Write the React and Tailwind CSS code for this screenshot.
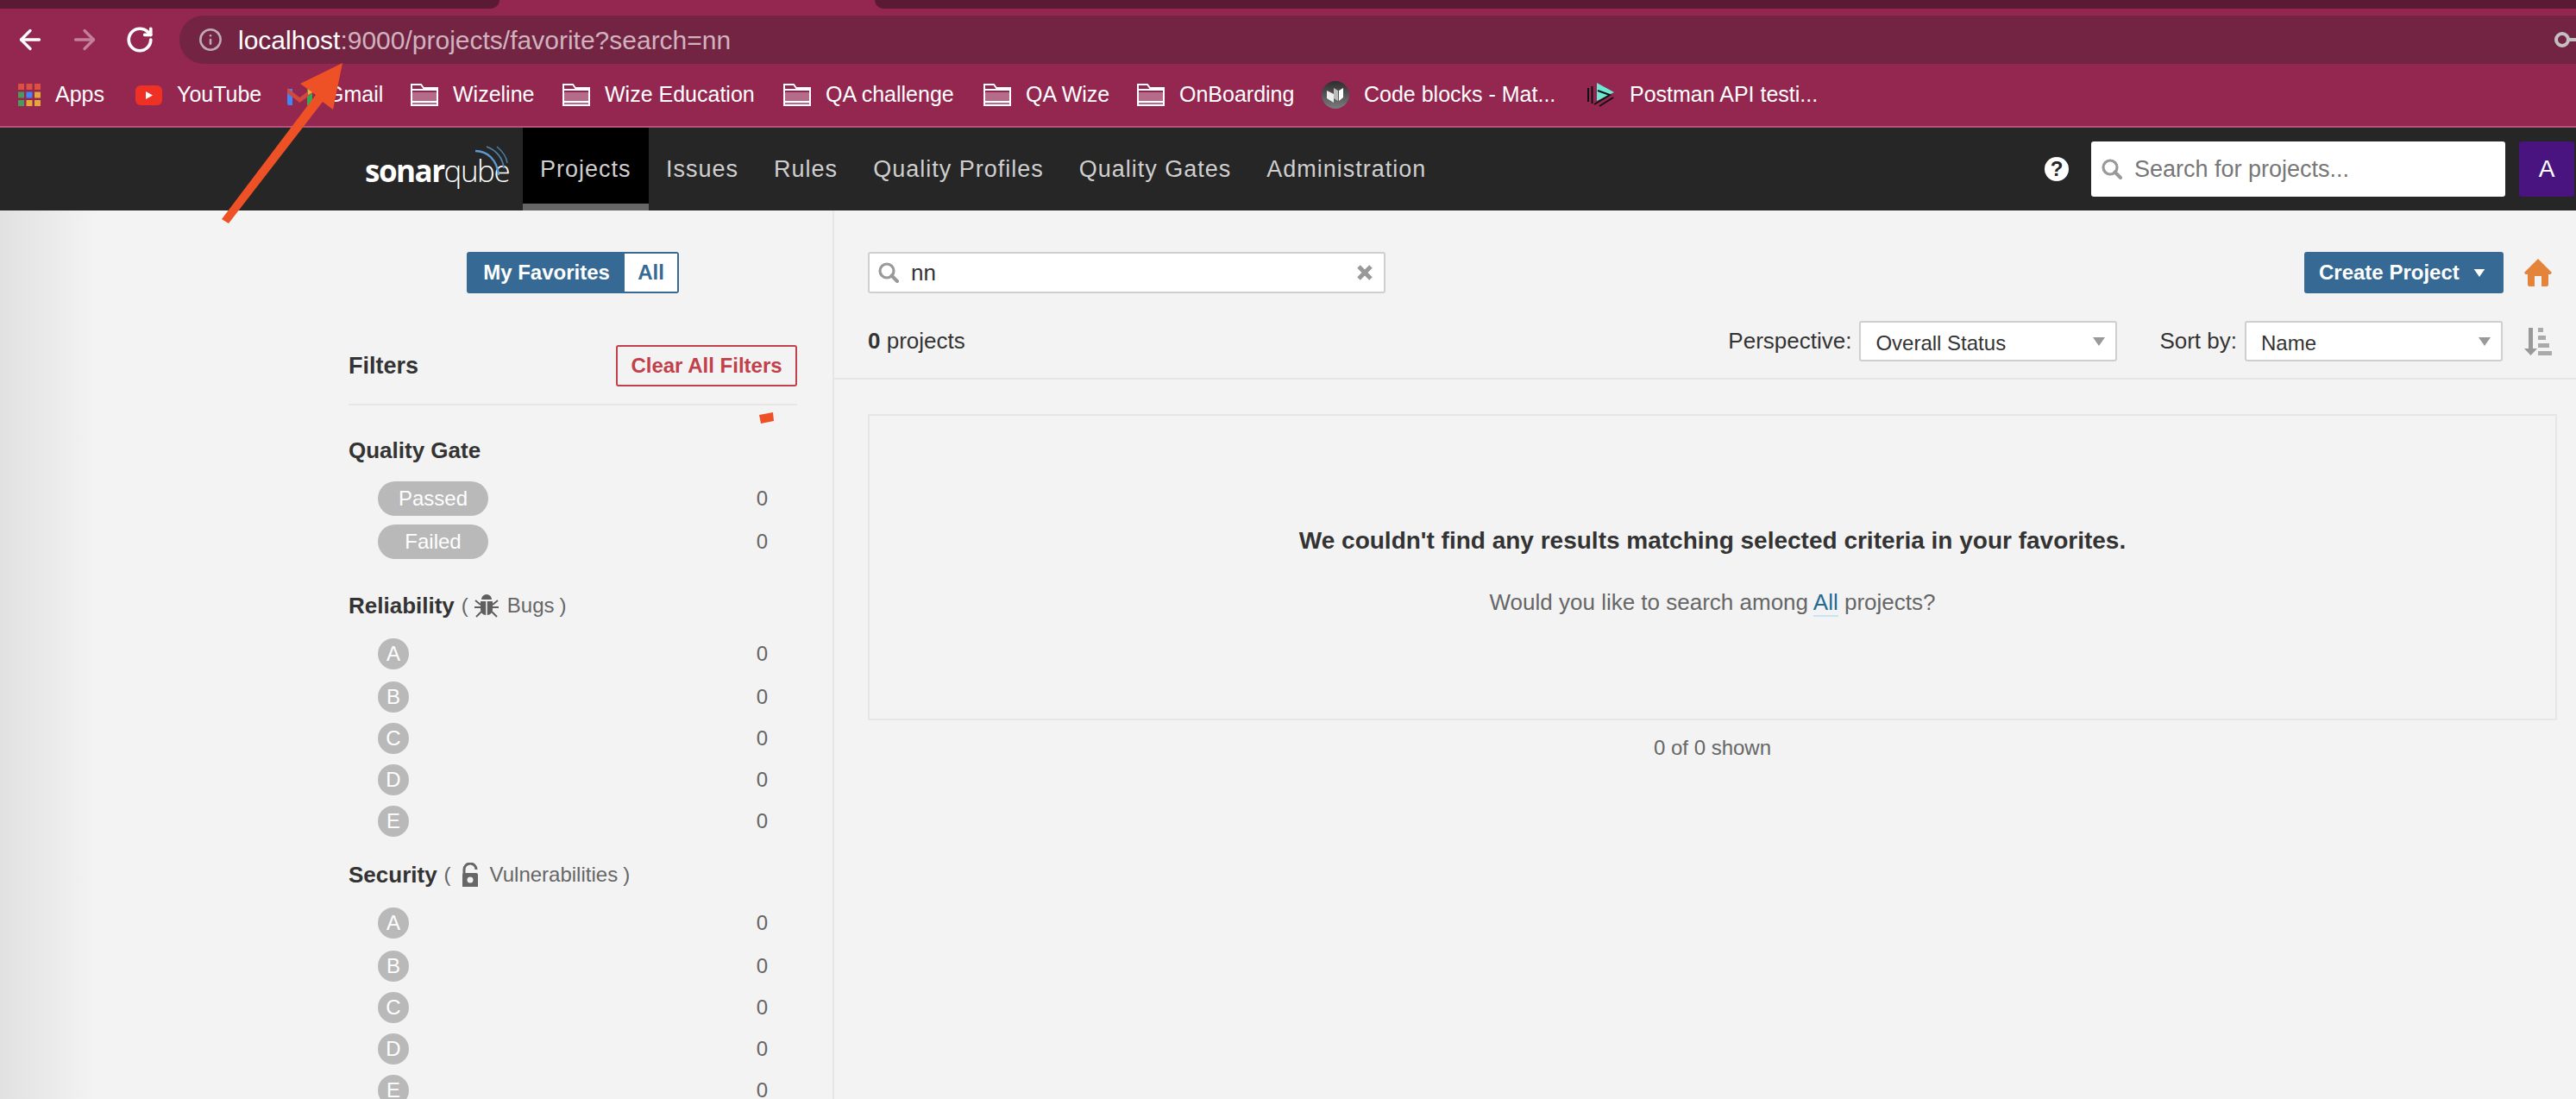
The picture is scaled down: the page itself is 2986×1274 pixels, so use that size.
import React from "react";
import { ArrowLeft, ArrowRight, RotateCw, Info } from "lucide-react";

const Folder = () => (
  <svg width="32" height="26" viewBox="0 0 32 26" className="shrink-0">
    <path d="M1 10h30v14H1z" fill="#b56b8a" />
    <path d="M1 25V1h11l3 4h16v20z M1 7h30 M1 21h30" fill="none" stroke="#fff" strokeWidth="2" />
  </svg>
);

const AppsIcon = () => (
  <svg width="26" height="26" viewBox="0 0 26 26" className="shrink-0">
    {[
      [0, 0, "#dd4f3f"], [9.5, 0, "#dd4f3f"], [19, 0, "#dd4f3f"],
      [0, 9.5, "#4b9a5c"], [9.5, 9.5, "#4285f4"], [19, 9.5, "#e3a63a"],
      [0, 19, "#4b9a5c"], [9.5, 19, "#e3a63a"], [19, 19, "#e3a63a"],
    ].map(([x, y, c], i) => (
      <rect key={i} x={x} y={y} width="7" height="7" fill={c} />
    ))}
  </svg>
);

const YoutubeIcon = () => (
  <svg width="31" height="23" viewBox="0 0 31 23" className="shrink-0">
    <rect width="31" height="23" rx="6" fill="#ee3124" />
    <path d="M12 7l8 4.5-8 4.5z" fill="#fff" />
  </svg>
);

const GmailIcon = () => (
  <svg width="29" height="24" viewBox="0 0 29 24" className="shrink-0">
    <path d="M0 5h6v19H2a2 2 0 0 1-2-2z" fill="#4285f4" />
    <path d="M23 5h6v17a2 2 0 0 1-2 2h-4z" fill="#34a853" />
    <path d="M0 4l14.5 11L29 4v6L14.5 21 0 10z" fill="#d0493f" />
    <path d="M24 1l5 3v5l-5 3z" fill="#e8b33a" />
  </svg>
);

const CodeBlocksIcon = () => (
  <svg width="32" height="32" viewBox="0 0 32 32" className="shrink-0">
    <defs>
      <linearGradient id="cb" x1="0" y1="0" x2="0" y2="1">
        <stop offset="0" stopColor="#2c2c2c" />
        <stop offset="1" stopColor="#7c7c7c" />
      </linearGradient>
    </defs>
    <circle cx="16" cy="16" r="16" fill="url(#cb)" />
    <path d="M6 11l8 4v10l-8-5z" fill="#eee" />
    <path d="M14 8l5 3v12l-5-3z" fill="#bbb" />
    <path d="M20 11l5-3v11l-5 4z" fill="#fff" />
  </svg>
);

const PostmanIcon = () => (
  <svg width="32" height="30" viewBox="0 0 32 30" className="shrink-0">
    <path d="M11 1l20 11-20 10z" fill="#6ce8d4" />
    <path d="M1 7v16M5.5 5v20M12 10l14 5-18 11M14 28l16-10" fill="none" stroke="#111" strokeWidth="2" />
  </svg>
);

const bookmarks = [
  { icon: <AppsIcon />, label: "Apps", w: "w-[136px]" },
  { icon: <YoutubeIcon />, label: "YouTube", w: "w-[176px]" },
  { icon: <GmailIcon />, label: "Gmail", w: "w-[143px]" },
  { icon: <Folder />, label: "Wizeline", w: "w-[176px]" },
  { icon: <Folder />, label: "Wize Education", w: "w-[256px]" },
  { icon: <Folder />, label: "QA challenge", w: "w-[232px]" },
  { icon: <Folder />, label: "QA Wize", w: "w-[178px]" },
  { icon: <Folder />, label: "OnBoarding", w: "w-[214px]" },
  { icon: <CodeBlocksIcon />, label: "Code blocks - Mat...", w: "w-[308px]" },
  { icon: <PostmanIcon />, label: "Postman API testi...", w: "w-[290px]" },
];

const navItems = ["Projects", "Issues", "Rules", "Quality Profiles", "Quality Gates", "Administration"];

const SearchIcon = ({ size = 24, color = "#999" }) => (
  <svg width={size} height={size} viewBox="0 0 24 24" className="shrink-0">
    <circle cx="10" cy="10" r="8" fill="none" stroke={color} strokeWidth="3.2" />
    <path d="M15.5 15.5L22 22" stroke={color} strokeWidth="4" strokeLinecap="round" />
  </svg>
);

const BugIcon = () => (
  <svg width="28" height="28" viewBox="0 0 28 28" className="shrink-0">
    <path d="M8 7a6 6 0 0 1 12 0z" fill="#5f5f5f" />
    <path d="M7 9h6.2v16C9.5 25 7 22 7 18z M14.8 9H21v9c0 4-2.500 7-6.200 7z" fill="#5f5f5f" />
    <path d="M1 8l6 5M27 8l-6 5M0 16h7M28 16h-7M2 27l6-6M26 27l-6-6" stroke="#5f5f5f" strokeWidth="2" fill="none" />
  </svg>
);

const LockIcon = () => (
  <svg width="20" height="28" viewBox="0 0 20 28" className="shrink-0">
    <path d="M3 13V8a7 7 0 0 1 14 0" fill="none" stroke="#666" strokeWidth="3" />
    <path d="M15.500 7v6" stroke="#666" strokeWidth="3" opacity="0" />
    <path d="M1 14a2 2 0 0 1 2-2h14a2 2 0 0 1 2 2v14H1z" fill="#666" />
    <circle cx="10" cy="20" r="3.500" fill="#f3f3f3" />
  </svg>
);

const Caret = ({ color = "#999", w = 14, h = 10 }) => (
  <svg width={w} height={h} viewBox="0 0 14 10" className="shrink-0">
    <path d="M0 0h14L7 10z" fill={color} />
  </svg>
);

const Select = ({ value }) => (
  <div className="w-[299px] h-[47px] flex items-center justify-between pl-[17px] pr-[12px] bg-white border-2 border-[#cfcfcf] rounded-[3px]">
    <span className="text-[24px] text-[#333] mt-[4px]">{value}</span>
    <Caret />
  </div>
);

const Count = () => <span className="text-[24px] leading-[30px] text-[#666]">0</span>;

const RatingRows = () => (
  <div>
    {["A", "B", "C", "D", "E"].map((letter, i) => (
      <div key={letter} className={`flex items-center justify-between pl-[34px] pr-[34px] h-[36px] ${i === 0 ? "mb-[14px]" : "mb-[12px]"}`}>
        <span className="w-[36px] h-[36px] rounded-full bg-[#b9b9b9] text-white text-[24px] flex items-center justify-center">{letter}</span>
        <Count />
      </div>
    ))}
  </div>
);

export default function App() {
  return (
    <div className="relative w-[2986px] h-[1274px] overflow-hidden bg-[#f3f3f3] font-['Liberation_Sans',Arial,sans-serif]">
      {/* browser chrome */}
      <div className="h-[148px] bg-[#93274f] border-b-2 border-[#b3527a]">
        <div className="h-[10px] flex justify-between">
          <div className="w-[579px] bg-[#5a1a33] rounded-br-[14px]" />
          <div className="w-[1972px] bg-[#5a1a33] rounded-bl-[14px]" />
        </div>
        <div className="mt-[8px] h-[56px] flex items-center pl-[17px]">
          <ArrowLeft size={36} color="#fff" strokeWidth={2.2} />
          <ArrowRight size={36} color="#c57f9b" strokeWidth={2.2} className="ml-[27px]" />
          <RotateCw size={34} color="#fff" strokeWidth={2.6} className="ml-[29px]" />
          <div className="ml-[29px] flex-1 h-[56px] bg-[#722442] rounded-l-full flex items-center pl-[22px] pr-[0px]">
            <Info size={28} color="#c0aab4" strokeWidth={2.2} className="mr-[18px]" />
            <span className="text-[30px] text-white">localhost</span>
            <span className="text-[30px] text-[#d0b3bf]">:9000/projects/favorite?search=nn</span>
            <div className="ml-auto w-[26px] h-[30px] overflow-hidden shrink-0">
              <svg width="40" height="30" viewBox="0 0 40 30">
                <circle cx="10" cy="15" r="7" fill="none" stroke="#c4c0c2" strokeWidth="4" />
                <path d="M17 13h23v4h-4v5h-4v-5H17z" fill="#c4c0c2" />
              </svg>
            </div>
          </div>
        </div>
        <div className="h-[72px] flex items-center pl-[21px]">
          {bookmarks.map((b) => (
            <div key={b.label} className={`${b.w} shrink-0 flex items-center gap-[17px]`}>
              {b.icon}
              <span className="text-[25px] text-white whitespace-nowrap">{b.label}</span>
            </div>
          ))}
        </div>
      </div>

      {/* sonarqube nav */}
      <div className="h-[96px] bg-[#262626] flex items-stretch pl-[423px] pr-[2px]">
        <div className="relative w-[165px] mr-[18px] flex items-center">
          <span className="text-[35px] leading-none tracking-[-1.5px] text-white font-['Open_Sans',sans-serif] whitespace-nowrap mt-[2px]">
            <span className="font-bold">sonar</span>
            <span className="font-light">qube</span>
          </span>
          <svg width="38" height="38" viewBox="0 0 38 38" className="absolute right-[-1px] top-[21px]">
            <path d="M0 6C14 6 25 16 27 34" fill="none" stroke="#5b9bd1" strokeWidth="2.4" />
            <path d="M13 1C24 5 32 14 33 26" fill="none" stroke="#4d83ad" strokeWidth="1.800" />
            <path d="M25 1C31 6 36 12 37 20" fill="none" stroke="#4d83ad" strokeWidth="1.400" />
          </svg>
        </div>
        {navItems.map((item, i) => (
          <div
            key={item}
            className={`px-[20px] flex items-center text-[27px] tracking-[1px] text-[#cfcfcf] whitespace-nowrap ${i === 0 ? "bg-black border-b-8 border-[#666] pt-[8px]" : "mx-[0.5px]"}`}
          >
            {item}
          </div>
        ))}
        <div className="ml-auto flex items-center">
          <div className="w-[28px] h-[28px] rounded-full bg-white flex items-center justify-center text-[#262626] text-[24px] font-bold mr-[26px]">?</div>
          <div className="w-[480px] h-[64px] bg-white rounded-[3px] flex items-center pl-[12px] gap-[14px] mr-[16px]">
            <SearchIcon />
            <span className="text-[27px] text-[#777]">Search for projects...</span>
          </div>
          <div className="w-[64px] h-[64px] bg-[#4a1480] rounded-[3px] flex items-center justify-center text-white text-[28px]">A</div>
        </div>
      </div>

      <div className="flex h-[1030px]">
        {/* filters */}
        <div className="w-[967px] shrink-0 border-r-2 border-[#e6e6e6] pl-[404px] pr-[41px] pt-[48px] bg-[linear-gradient(90deg,#e1e1e1,#f3f3f3_110px)]">
          <div className="flex justify-center">
            <div className="flex h-[48px] w-[246px] border-2 border-[#366a94] rounded-[3px] text-[24px] font-bold">
              <div className="w-[181px] bg-[#366a94] text-white flex items-center justify-center">My Favorites</div>
              <div className="flex-1 bg-white text-[#366a94] flex items-center justify-center">All</div>
            </div>
          </div>
          <div className="mt-[60px] flex items-center justify-between pb-[20px] border-b-2 border-[#e6e6e6]">
            <span className="text-[27px] font-bold text-[#333]">Filters</span>
            <div className="w-[210px] h-[48px] border-2 border-[#c1404a] rounded-[3px] text-[#c1404a] text-[24px] font-bold flex items-center justify-center">Clear All Filters</div>
          </div>
          <div className="mt-[37px] h-[30px] leading-[30px] text-[26px] font-bold text-[#333]">Quality Gate</div>
          <div className="mt-[21px] flex flex-col gap-[10px]">
            {["Passed", "Failed"].map((label) => (
              <div key={label} className="flex items-center justify-between pl-[34px] pr-[34px]">
                <span className="w-[128px] h-[40px] rounded-full bg-[#b9b9b9] text-white text-[24px] flex items-center justify-center">{label}</span>
                <Count />
              </div>
            ))}
          </div>
          <div className="mt-[39px] mb-[23px] h-[30px] flex items-center text-[24px] text-[#666]">
            <span className="text-[26px] font-bold text-[#333]">Reliability</span>
            <span className="ml-[8px]">(</span>
            <span className="ml-[7px]"><BugIcon /></span>
            <span className="ml-[10px]">Bugs</span>
            <span className="ml-[6px]">)</span>
          </div>
          <RatingRows />
          <div className="mt-[29px] mb-[23px] h-[30px] flex items-center text-[24px] text-[#666]">
            <span className="text-[26px] font-bold text-[#333]">Security</span>
            <span className="ml-[8px]">(</span>
            <span className="ml-[12px]"><LockIcon /></span>
            <span className="ml-[13px]">Vulnerabilities</span>
            <span className="ml-[6px]">)</span>
          </div>
          <RatingRows />
        </div>

        {/* results */}
        <div className="flex-1 min-w-0">
          <div className="pl-[39px] pr-[28px] pt-[48px] pb-[19px] border-b-2 border-[#e6e6e6]">
            <div className="flex items-center h-[48px]">
              <div className="w-[600px] h-[48px] bg-white border-2 border-[#cfcfcf] rounded-[3px] flex items-center pl-[10px] pr-[12px]">
                <SearchIcon />
                <span className="ml-[14px] text-[26px] text-[#333]">nn</span>
                <svg width="20" height="20" viewBox="0 0 20 20" className="ml-auto">
                  <path d="M3 3l14 14M17 3L3 17" stroke="#999" strokeWidth="5" />
                </svg>
              </div>
              <div className="ml-auto w-[231px] h-[48px] bg-[#366a94] rounded-[3px] flex items-center pl-[17px] text-white text-[24px] font-bold">
                Create Project
                <span className="ml-[16px]"><Caret color="#fff" w={14} h={9} /></span>
              </div>
              <svg width="32" height="32" viewBox="0 0 32 32" className="ml-[24px] shrink-0">
                <path d="M16 0l16 16-1.500 2H28v12a2 2 0 0 1-2 2h-6V20h-8v12H6a2 2 0 0 1-2-2V18H1.500L0 16z" fill="#e3843a" />
              </svg>
            </div>
            <div className="mt-[32px] flex items-center h-[47px]">
              <span className="text-[26px] text-[#333]"><b>0</b> projects</span>
              <div className="ml-auto flex items-center gap-[9px]">
                <span className="text-[26px] text-[#333]">Perspective:</span>
                <Select value="Overall Status" />
              </div>
              <div className="ml-[49px] flex items-center gap-[9px]">
                <span className="text-[26px] text-[#333]">Sort by:</span>
                <Select value="Name" />
              </div>
              <svg width="32" height="32" viewBox="0 0 32 32" className="ml-[25px] shrink-0">
                <path d="M5 0h5v24h5l-7.500 8L0 24h5z" fill="#999" />
                <path d="M16 0h6v5h-6zM16 9h9v5h-9zM16 18h13v5h-13zM16 27h16v5H16z" fill="#aaa" />
              </svg>
            </div>
          </div>

          <div className="mt-[40px] ml-[39px] mr-[22px] h-[355px] border-2 border-[#e6e6e6] pt-[128px] text-center">
            <div className="h-[34px] leading-[34px] text-[28px] font-bold text-[#333]">We couldn't find any results matching selected criteria in your favorites.</div>
            <div className="mt-[37px] h-[34px] leading-[34px] text-[26px] text-[#666]">
              Would you like to search among{" "}
              <span className="text-[#236a97] border-b-2 border-[#cae3f2]">All</span> projects?
            </div>
          </div>
          <div className="mt-[17px] ml-[39px] mr-[22px] h-[30px] leading-[30px] text-center text-[24px] text-[#666]">0 of 0 shown</div>
        </div>
      </div>

      {/* red annotation drawn on top of the screenshot */}
      <svg width="2986" height="1274" viewBox="0 0 2986 1274" className="absolute left-0 top-0 pointer-events-none">
        <path d="M397 73L386 127 374 118 265 259 257 254 366 110 348 97z" fill="#ef5127" />
        <path d="M880 481L896 478 897 488 882 491z" fill="#ef5127" />
      </svg>
    </div>
  );
}
